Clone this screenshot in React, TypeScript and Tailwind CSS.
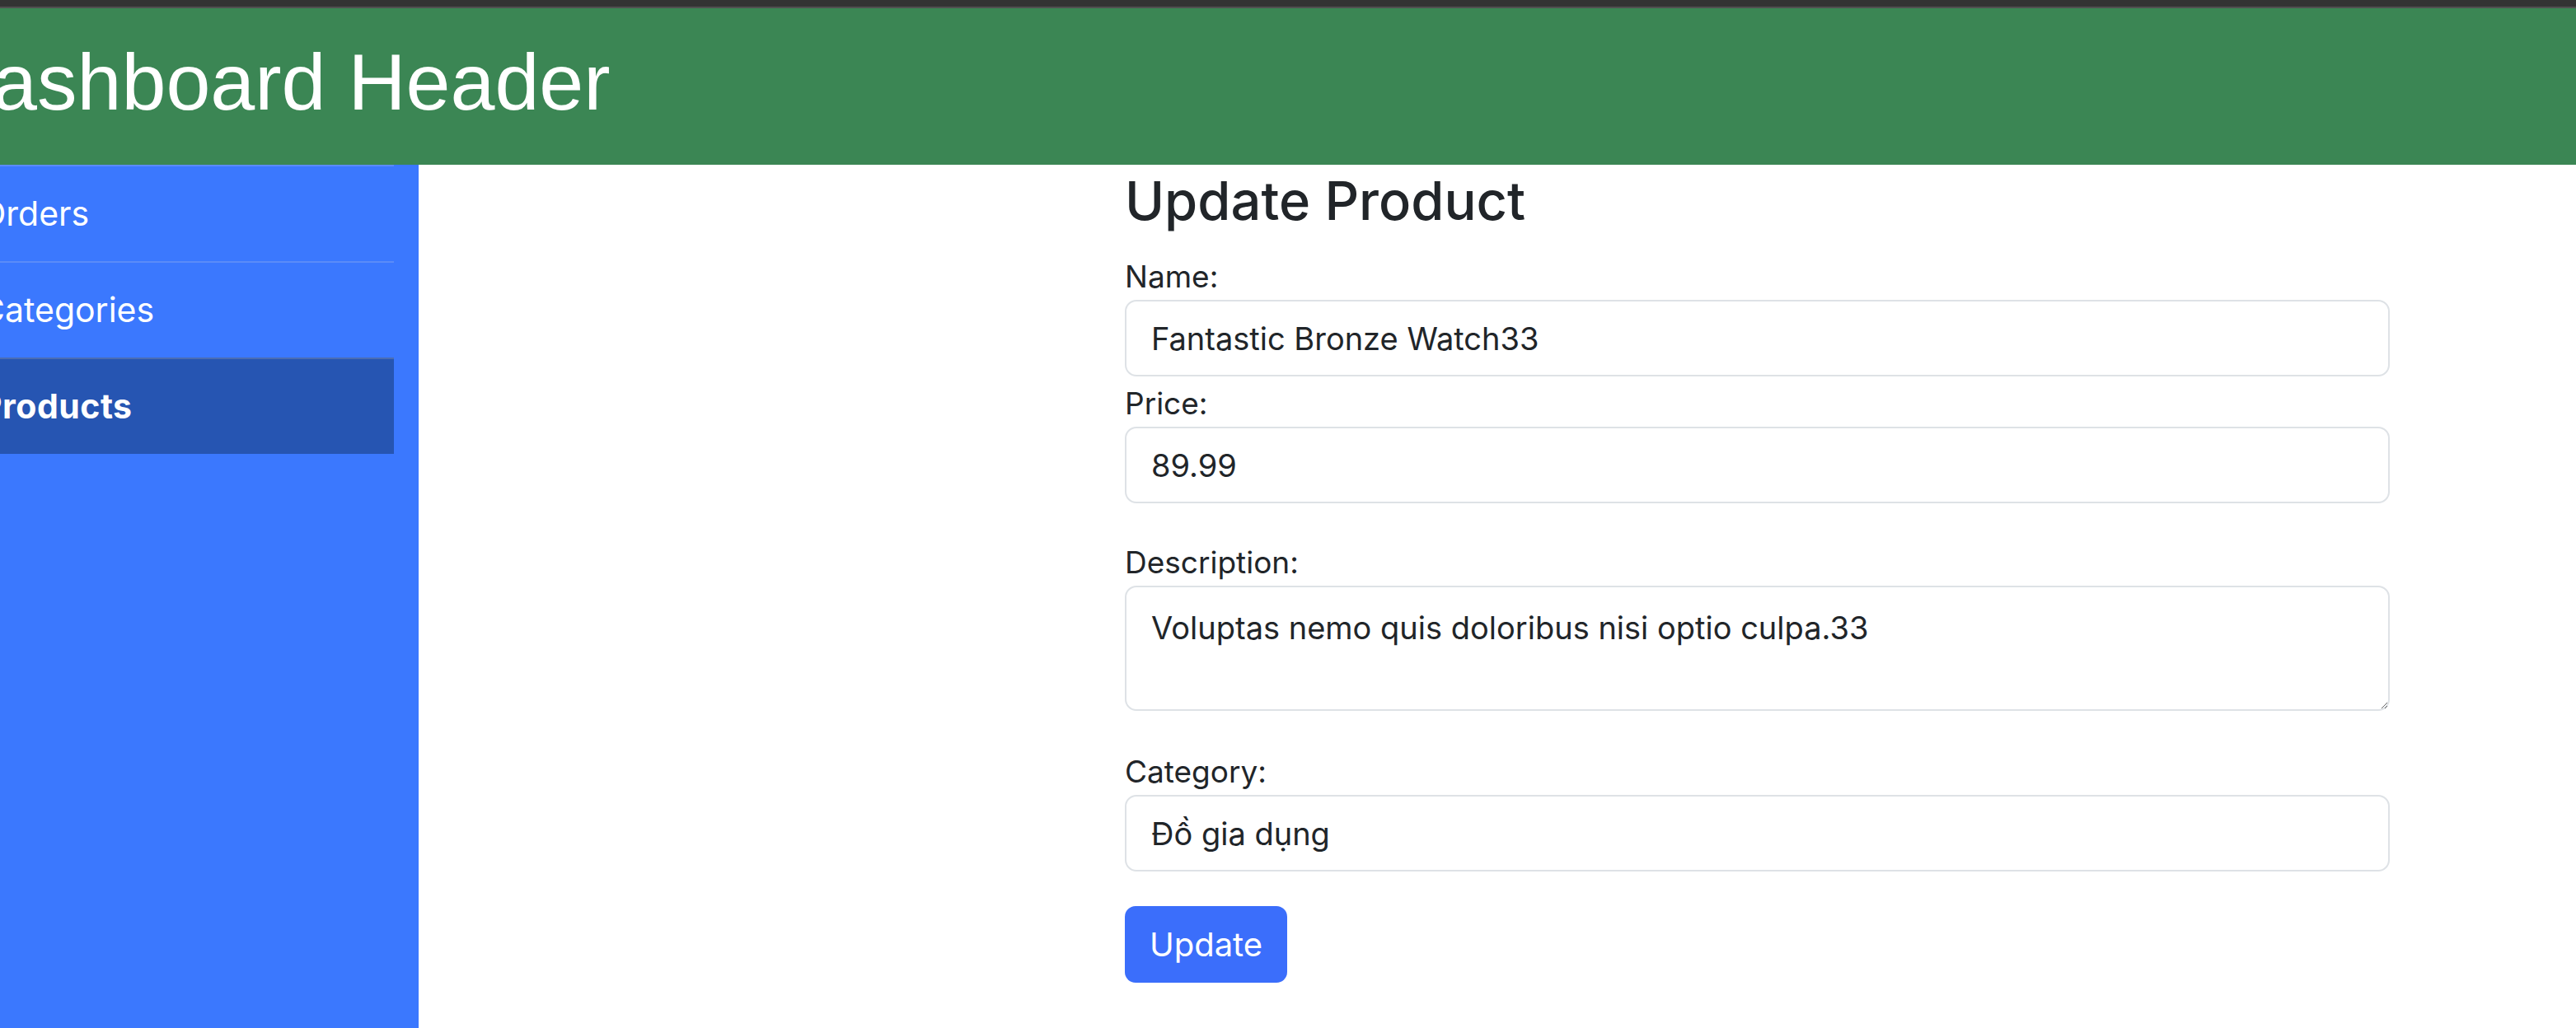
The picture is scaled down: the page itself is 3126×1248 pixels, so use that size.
import React from 'react';

type NavItem = {
  label: string;
  active?: boolean;
};

const navItems: NavItem[] = [
  { label: 'Orders' },
  { label: 'Categories' },
  { label: 'Products', active: true },
];

const sans = 'font-[Inter,"Noto_Sans",sans-serif]';

function Sidebar() {
  return (
    <aside className="w-[508px] shrink-0 bg-[#3b78fe]">
      <ul className="w-[478px]">
        {navItems.map((item) => (
          <li
            key={item.label}
            className={
              item.active
                ? 'flex h-[117px] items-center overflow-hidden border-t-2 border-[#4a6db3] bg-[#2655b2]'
                : 'flex h-[117px] items-center overflow-hidden border-t-2 border-[#5b8cf8]'
            }
          >
            <span
              className={`-ml-[24px] whitespace-nowrap text-[41px] leading-none text-white ${item.active ? 'font-bold tracking-[0.5px]' : 'font-normal'}`}
            >
              {item.label}
            </span>
          </li>
        ))}
      </ul>
    </aside>
  );
}

interface FieldProps {
  label: string;
  className: string;
  children: React.ReactNode;
}

function Field({ label, className, children }: FieldProps) {
  return (
    <div className={className}>
      <label className="block text-[37px] leading-[52px] text-[#212529]">{label}</label>
      <div className="mt-[2px]">{children}</div>
    </div>
  );
}

const inputClass =
  'block h-[93px] w-full rounded-[14px] border-2 border-[#dee2e6] bg-white px-[30px] text-[38px] text-[#212529] outline-none';

function UpdateProductForm() {
  return (
    <form className="w-[1535px] pt-[4px]" onSubmit={(e) => e.preventDefault()}>
      <h2 className="text-[65px] font-medium leading-[80px] text-[#212529]">Update Product</h2>

      <Field label="Name:" className="mt-[26px] mb-[7px]">
        <input type="text" readOnly defaultValue="Fantastic Bronze Watch33" className={inputClass} />
      </Field>

      <Field label="Price:" className="mb-[46px]">
        <input type="text" readOnly defaultValue="89.99" className={inputClass} />
      </Field>

      <Field label="Description:" className="mb-[48px]">
        <textarea
          readOnly
          defaultValue="Voluptas nemo quis doloribus nisi optio culpa.33"
          className="block h-[152px] w-full rounded-[14px] border-2 border-[#dee2e6] bg-white px-[30px] py-[21px] text-[38px] leading-normal text-[#212529] outline-none"
        />
      </Field>

      <Field label="Category:" className="mb-[42px]">
        <input type="text" readOnly defaultValue="Đồ gia dụng" className={inputClass} />
      </Field>

      <button
        type="submit"
        className="h-[93px] w-[197px] rounded-[13px] bg-[#3b6efb] text-[40px] text-white"
      >
        Update
      </button>
    </form>
  );
}

export default function App() {
  return (
    <div className={`flex h-[1248px] w-full flex-col overflow-hidden bg-white ${sans}`}>
      <div className="h-[8px] shrink-0 bg-[#333333]" />
      <div className="h-[2px] shrink-0 bg-[#505050]" />
      <header className="flex h-[190px] shrink-0 items-start overflow-hidden bg-[#3b8654] pt-[41px]">
        <h1 className='-ml-[79px] whitespace-nowrap font-["Liberation_Sans",Arial,sans-serif] text-[97px] font-normal leading-[97px] text-white'>
          Dashboard Header
        </h1>
      </header>
      <div className="flex min-h-0 flex-1">
        <Sidebar />
        <main className="flex-1 pl-[857px]">
          <UpdateProductForm />
        </main>
      </div>
    </div>
  );
}
